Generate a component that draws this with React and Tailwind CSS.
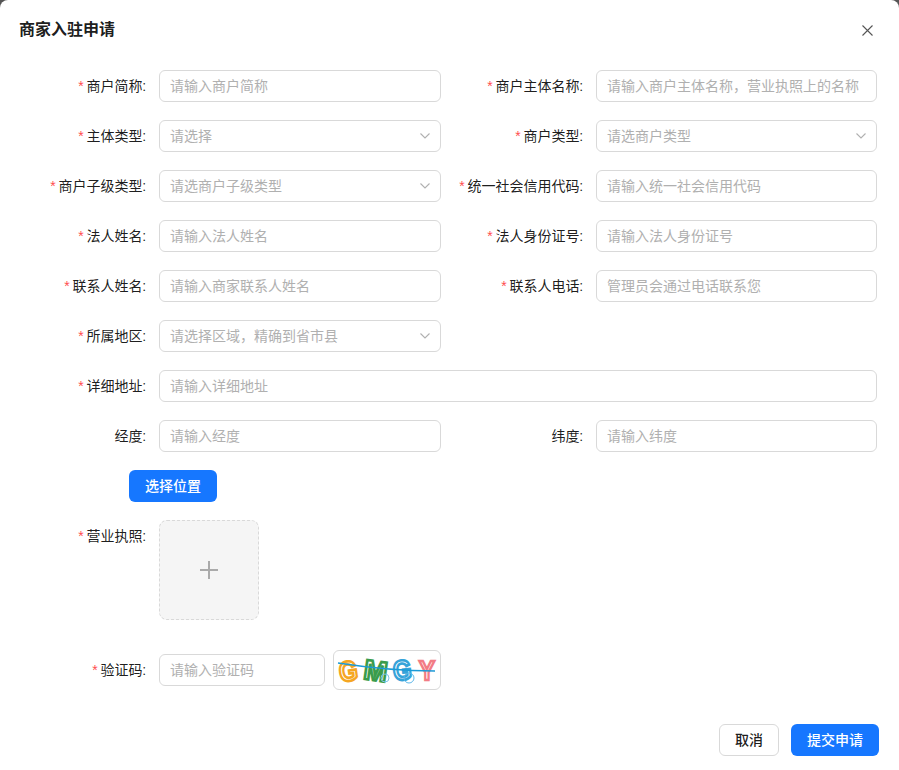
const Label = ({ text, required = true }) => (
  <label className="w-[125px] shrink-0 pr-px text-right text-sm leading-[32px] text-black/90 whitespace-nowrap">
    {required && <span className="font-['Liberation_Sans'] text-[#ff4d4f] mr-[3px]">*</span>}
    {text}:
  </label>
);

const Input = ({ placeholder, className = "w-full" }) => (
  <input
    placeholder={placeholder}
    className={`h-8 border border-[#d9d9d9] rounded-md px-[10px] text-sm bg-white outline-none placeholder:text-[#b0b0b0] ${className}`}
  />
);

const Chevron = () => (
  <svg width="10" height="6" viewBox="0 0 10 6" fill="none" stroke="#b0b0b0" strokeWidth="1.1">
    <path d="M0.5 0.5 5 5 9.5 0.5" />
  </svg>
);

const Select = ({ placeholder }) => (
  <div className="h-8 w-full border border-[#d9d9d9] rounded-md pl-[10px] pr-[10px] flex items-center justify-between bg-white">
    <span className="text-sm text-[#b0b0b0]">{placeholder}</span>
    <Chevron />
  </div>
);

const Field = ({ label, required, children }) => (
  <div className="flex gap-3 mb-[18px]">
    <Label text={label} required={required} />
    <div className="flex-1 min-w-0">{children}</div>
  </div>
);

const Letter = ({ x, y, rotate, sx = 0.85, color, children }) => (
  <text
    stroke={color}
    transform={`translate(${x} ${y}) rotate(${rotate} 8 -10) scale(${sx} 1)`}
  >
    {children}
  </text>
);

const Captcha = () => (
  <svg width="106" height="38" viewBox="0 0 106 38">
    <g fontFamily="'Liberation Sans', sans-serif" fontWeight="700" fontSize="28" fill="none" strokeWidth="2.6">
      <Letter x={5} y={30} rotate={-8} color="#f5a623">G</Letter>
      <Letter x={30} y={29} rotate={8} sx={1} color="#3a9c4c">M</Letter>
      <Letter x={59} y={29} rotate={-6} color="#36a3d9">G</Letter>
      <Letter x={85} y={29} rotate={0} color="#f27c85">Y</Letter>
    </g>
    <path d="M4 12 C30 16 60 20 101 20" fill="none" stroke="#1c9ad6" strokeWidth="1.5" />
    <circle cx="51" cy="27" r="4" fill="none" stroke="#7ec4e8" strokeWidth="1" />
    <circle cx="75" cy="27" r="5" fill="none" stroke="#5cb6e8" strokeWidth="1" />
  </svg>
);

export default function App() {
  return (
    <div
      className="w-[899px] h-[770px] bg-[#555] overflow-hidden"
      style={{ fontFamily: 'Roboto, "Noto Sans CJK SC", sans-serif' }}
    >
      <div className="h-full bg-white rounded-t-lg flex flex-col">
        <div className="flex items-center justify-between h-[60px] pl-[19px] pr-[26px]">
          <h2 className="text-base font-semibold text-black/90">商家入驻申请</h2>
          <svg width="11" height="11" viewBox="0 0 11 11" fill="none" stroke="#555" strokeWidth="1.1">
            <path d="M0.5 0.5 10.5 10.5M10.5 0.5 0.5 10.5" />
          </svg>
        </div>
        <div className="pl-[22px] pt-[10px] w-[877px]">
          <div className="grid grid-cols-[419px_418px] gap-x-[18px]">
            <Field label="商户简称"><Input placeholder="请输入商户简称" /></Field>
            <Field label="商户主体名称"><Input placeholder="请输入商户主体名称，营业执照上的名称" /></Field>
            <Field label="主体类型"><Select placeholder="请选择" /></Field>
            <Field label="商户类型"><Select placeholder="请选商户类型" /></Field>
            <Field label="商户子级类型"><Select placeholder="请选商户子级类型" /></Field>
            <Field label="统一社会信用代码"><Input placeholder="请输入统一社会信用代码" /></Field>
            <Field label="法人姓名"><Input placeholder="请输入法人姓名" /></Field>
            <Field label="法人身份证号"><Input placeholder="请输入法人身份证号" /></Field>
            <Field label="联系人姓名"><Input placeholder="请输入商家联系人姓名" /></Field>
            <Field label="联系人电话"><Input placeholder="管理员会通过电话联系您" /></Field>
            <Field label="所属地区"><Select placeholder="请选择区域，精确到省市县" /></Field>
            <div />
          </div>
          <Field label="详细地址"><Input placeholder="请输入详细地址" /></Field>
          <div className="grid grid-cols-[419px_418px] gap-x-[18px]">
            <Field label="经度" required={false}><Input placeholder="请输入经度" /></Field>
            <Field label="纬度" required={false}><Input placeholder="请输入纬度" /></Field>
          </div>
          <button className="ml-[107px] mb-[18px] h-8 w-[88px] rounded-md bg-[#1677ff] text-white text-sm font-medium block">
            选择位置
          </button>
          <div className="flex gap-3 mb-[30px]">
            <Label text="营业执照" />
            <div className="w-[100px] h-[100px] rounded-lg border border-dashed border-[#d9d9d9] bg-black/[0.04] flex items-center justify-center">
              <svg width="18" height="18" viewBox="0 0 18 18" fill="none" stroke="#aaa" strokeWidth="2">
                <path d="M9 0V18M0 9H18" />
              </svg>
            </div>
          </div>
          <div className="flex gap-3 items-center">
            <Label text="验证码" />
            <div className="flex items-center gap-2">
              <Input placeholder="请输入验证码" className="w-[166px]" />
              <div className="w-[108px] h-10 border border-[#d9d9d9] rounded-md overflow-hidden flex items-center justify-center">
                <Captcha />
              </div>
            </div>
          </div>
        </div>
        <div className="mt-[34px] flex justify-end gap-3 pr-5">
          <button className="h-8 w-[60px] rounded-md border border-[#d9d9d9] bg-white text-sm font-medium text-black/90">取消</button>
          <button className="h-8 w-[88px] rounded-md bg-[#1677ff] text-white text-sm font-medium">提交申请</button>
        </div>
      </div>
    </div>
  );
}
